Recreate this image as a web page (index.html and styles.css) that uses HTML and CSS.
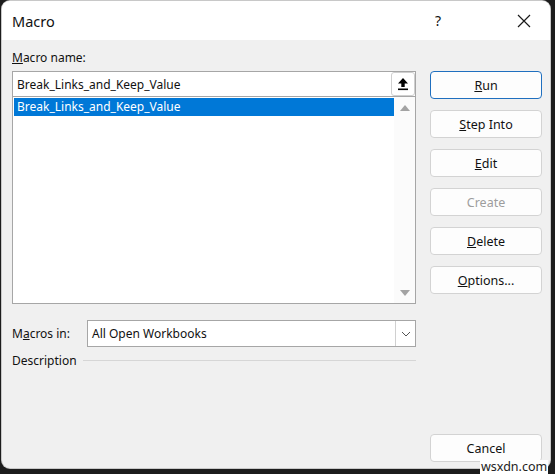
FILE: index.html
```html
<!DOCTYPE html>
<html>
<head>
<meta charset="utf-8">
<link rel="stylesheet" href="styles.css">
</head>
<body>
<div class="window">
  <div class="titlebar">
    <span class="title">Macro</span>
    <span class="help">?</span>
    <span class="close">
      <svg width="14" height="14" viewBox="0 0 14 14"><path d="M1 1 L13 13 M13 1 L1 13" stroke="#1a1a1a" stroke-width="1.2" fill="none"/></svg>
    </span>
  </div>
  <div class="content">
    <div class="left">
      <div class="label"><u>M</u>acro name:</div>
      <div class="namebox">
        <span class="nametext">Break_Links_and_Keep_Value</span>
        <span class="upbtn">
          <svg width="12" height="14" viewBox="0 0 12 14"><path d="M6 1 L11 6.5 L7.7 6.5 L7.7 10 L4.3 10 L4.3 6.5 L1 6.5 Z" fill="#000"/><rect x="1" y="11.5" width="10" height="1.6" fill="#000"/></svg>
        </span>
      </div>
      <div class="list">
        <div class="items">
          <div class="item selected">Break_Links_and_Keep_Value</div>
        </div>
        <div class="scroll">
          <svg width="10" height="6" viewBox="0 0 10 6"><path d="M0 6 L5 0 L10 6 Z" fill="#a3a3a3"/></svg>
          <svg width="10" height="6" viewBox="0 0 10 6"><path d="M0 0 L5 6 L10 0 Z" fill="#a3a3a3"/></svg>
        </div>
      </div>
      <div class="inrow">
        <span class="inlabel">M<u>a</u>cros in:</span>
        <div class="select">
          <span class="seltext">All Open Workbooks</span>
          <span class="selbtn">
            <svg width="10" height="6" viewBox="0 0 10 6"><path d="M1 1 L5 5 L9 1" stroke="#555" stroke-width="1" fill="none"/></svg>
          </span>
        </div>
      </div>
      <div class="desc">
        <span>Description</span>
        <span class="rule"></span>
      </div>
    </div>
    <div class="right">
      <button class="btn default"><u>R</u>un</button>
      <button class="btn"><u>S</u>tep Into</button>
      <button class="btn"><u>E</u>dit</button>
      <button class="btn disabled">Create</button>
      <button class="btn"><u>D</u>elete</button>
      <button class="btn"><u>O</u>ptions...</button>
      <div class="spacer"></div>
      <button class="btn">Cancel</button>
    </div>
  </div>
</div>
<div class="watermark">wsxdn.com</div>
</body>
</html>
```

FILE: styles.css
```css
html, body {
  margin: 0;
  padding: 0;
  width: 555px;
  height: 474px;
  overflow: hidden;
  background: #1c1c1c;
}
body {
  font-family: "Noto Sans", "Open Sans", sans-serif;
  font-size: 12px;
  color: #111;
  padding: 1px 5px 6px 2px;
  box-sizing: border-box;
  position: relative;
}
.window {
  width: 548px;
  height: 467px;
  background: #f0f0f0;
  border-radius: 8px;
  overflow: hidden;
  display: flex;
  flex-direction: column;
  box-shadow: 0 0 0 1px #c8c8c8;
}
.titlebar {
  height: 39px;
  background: #ffffff;
  display: flex;
  align-items: center;
  padding-left: 10px;
  box-sizing: border-box;
  flex: none;
}
.title {
  font-size: 14.5px;
  flex: 1;
  padding-top: 1px;
}
.help {
  font-size: 14px;
  width: 20px;
  text-align: center;
  margin-right: 69px;
}
.close {
  width: 14px;
  height: 14px;
  display: flex;
  margin-right: 19px;
}
.content {
  flex: 1;
  display: flex;
  padding: 9px 8px 6px 10px;
}
.left {
  width: 404px;
  display: flex;
  flex-direction: column;
}
.label {
  height: 18px;
  line-height: 18px;
  margin-bottom: 4px;
}
.namebox {
  height: 26px;
  box-sizing: border-box;
  border: 1px solid #a6a6a6;
  background: #fff;
  display: flex;
  align-items: center;
  padding-left: 4px;
}
.nametext {
  flex: 1;
}
.upbtn {
  width: 24px;
  height: 24px;
  box-sizing: border-box;
  border: 1px solid #cfcfcf;
  border-radius: 3px;
  display: flex;
  align-items: center;
  justify-content: center;
  background: #fff;
}
.list {
  height: 207px;
  box-sizing: border-box;
  border: 1px solid #a6a6a6;
  border-top: none;
  background: #fff;
  display: flex;
}
.items {
  flex: 1;
  padding: 1px 0 0 1px;
}
.item {
  height: 18px;
  line-height: 18px;
  padding-left: 3px;
}
.item.selected {
  background: #0078d7;
  color: #fff;
}
.scroll {
  width: 21px;
  display: flex;
  flex-direction: column;
  justify-content: space-between;
  align-items: center;
  padding: 8px 0 7px;
  background: #fbfbfb;
}
.inrow {
  display: flex;
  align-items: center;
  margin-top: 16px;
  height: 27px;
}
.inlabel {
  width: 75px;
}
.select {
  flex: 1;
  height: 27px;
  box-sizing: border-box;
  border: 1px solid #a6a6a6;
  background: #fff;
  display: flex;
  align-items: center;
  padding-left: 4px;
}
.seltext {
  flex: 1;
}
.selbtn {
  width: 19px;
  height: 25px;
  border-left: 1px solid #d0d0d0;
  display: flex;
  align-items: center;
  justify-content: center;
}
.desc {
  display: flex;
  align-items: center;
  margin-top: 4px;
  height: 18px;
}
.rule {
  flex: 1;
  height: 1px;
  background: #d6d6d6;
  margin-left: 6px;
}
.right {
  flex: 1;
  display: flex;
  flex-direction: column;
  padding-left: 14px;
  padding-top: 22px;
  gap: 11px;
}
.spacer {
  flex: 1;
}
.btn {
  height: 28px;
  width: 112px;
  box-sizing: border-box;
  background: #fdfdfd;
  border: 1px solid #d3d3d3;
  border-radius: 4px;
  font-family: inherit;
  font-size: 12.5px;
  color: #111;
  padding: 0;
  flex: none;
}
.btn.default {
  border-color: #1f6fbf;
}
.btn.disabled {
  color: #9d9d9d;
}
.watermark {
  position: absolute;
  left: 480px;
  top: 460px;
  font-family: "Noto Sans", sans-serif;
  font-size: 12.5px;
  line-height: 14px;
  white-space: nowrap;
  color: #222;
  background: #fff;
  padding: 0 1px;
}
```
